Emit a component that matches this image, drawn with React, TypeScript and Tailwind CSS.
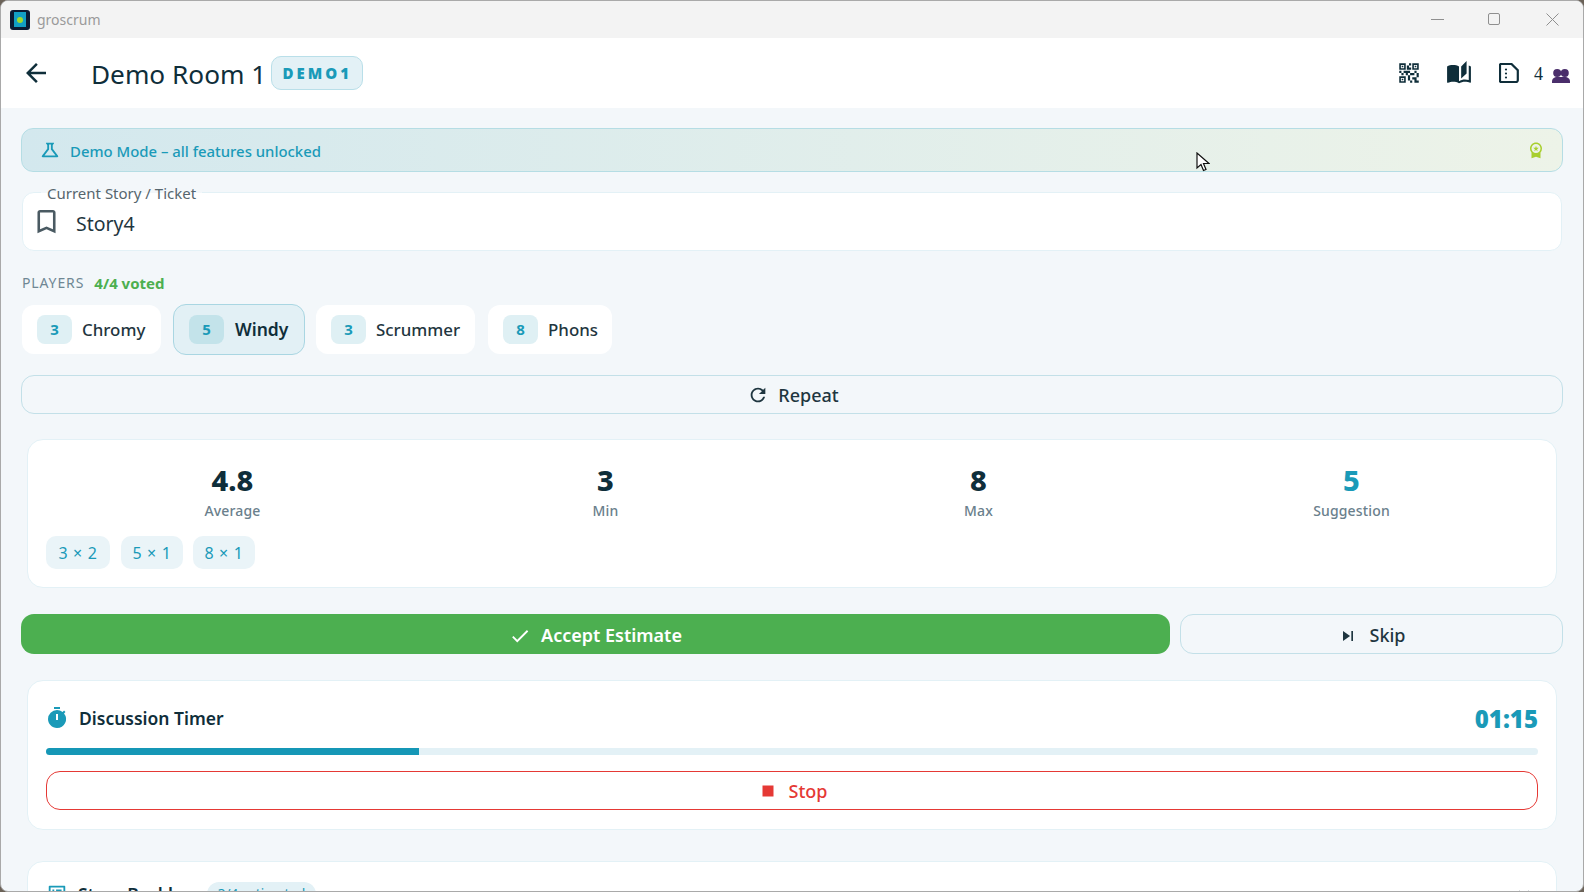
import React from "react";
import {
  MdArrowBack,
  MdAutoStories,
  MdBookmarkBorder,
  MdCheck,
  MdExpandMore,
  MdOutlineListAlt,
  MdOutlineScience,
  MdQrCode2,
  MdRefresh,
  MdSkipNext,
  MdStop,
  MdTimer,
  MdWorkspacePremium,
} from "react-icons/md";

const players = [
  { v: "3", n: "Chromy", w: "w-[139px]" },
  { v: "5", n: "Windy", w: "w-[132px] -mr-px", active: true },
  { v: "3", n: "Scrummer", w: "w-[159px] mr-px" },
  { v: "8", n: "Phons", w: "w-[124px]" },
];

const stats = [
  { v: "4.8", l: "Average" },
  { v: "3", l: "Min" },
  { v: "8", l: "Max" },
  { v: "5", l: "Suggestion", accent: true },
];

export default function App() {
  return (
    <div className="w-[1584px] h-[892px] overflow-hidden bg-[#6b6258] font-['Noto_Sans',sans-serif] text-[#0f2e3a]">
      <div className="relative w-full h-full overflow-hidden rounded-[8px] border border-[#a9a9a9] bg-[#f3f7fa]">
        <div className="h-[37px] bg-[#f3f3f3] flex items-center pl-[9px]">
          <div className="w-5 h-5 rounded-[3px] bg-[#0b1c33] flex items-center justify-center">
            <div className="w-[12px] h-[15px] bg-[#12a0c4] flex items-center justify-center">
              <div className="w-[6px] h-[6px] rounded-full bg-[#9fdc2c]" />
            </div>
          </div>
          <span className="ml-[7px] text-[14px] text-[#9a9a9a]">groscrum</span>
          <div className="ml-auto -mt-px flex items-center text-[#8c8c8c]">
            <div className="w-[13px] h-px bg-[#8f8f8f] mr-[44px]" />
            <div className="w-[12px] h-[12px] border border-[#8f8f8f] rounded-[2px] mr-[46px]" />
            <svg width="13" height="13" viewBox="0 0 13 13" className="mr-[24px]" stroke="#8f8f8f" fill="none">
              <path d="M.5.5l12 12M12.5.5l-12 12" />
            </svg>
          </div>
        </div>

        <header className="h-[70px] bg-white flex items-center pl-[20px] pr-[13px]">
          <MdArrowBack className="w-[30px] h-[30px]" />
          <h1 className="ml-[40px] mt-[3px] text-[26.2px] leading-none font-normal">Demo Room 1</h1>
          <div className="ml-[5px] h-[34px] w-[92px] rounded-[10px] bg-[#e3f1f6] border border-[#b9dfe9] flex items-center justify-center text-[15px] font-black tracking-[3px] text-[#1a9ab8]">
            DEMO1
          </div>
          <div className="ml-auto flex items-center">
            <MdQrCode2 className="w-[26px] h-[26px]" />
            <MdAutoStories className="ml-[24px] w-[26px] h-[26px]" />
            <svg width="20" height="20" viewBox="0 0 20 20" className="ml-[27px]" fill="none">
              <path d="M2.2 1h10.3l6.3 6.3v10a1.7 1.7 0 0 1-1.7 1.7H2.2a1.2 1.2 0 0 1-1.2-1.2V2.2A1.2 1.2 0 0 1 2.2 1z" stroke="#0f2e3a" strokeWidth="2.2" />
              <circle cx="7" cy="6.5" r="1.1" fill="#0f2e3a" />
              <circle cx="7" cy="10.5" r="1.1" fill="#0f2e3a" />
              <circle cx="7" cy="14.5" r="1.1" fill="#0f2e3a" />
            </svg>
            <span className="ml-[15px] text-[18px] leading-none mt-[2px] font-['Liberation_Serif',serif]">4</span>
            <svg width="18" height="14" viewBox="0 0 18 14" className="ml-[9px] mt-[5px]" fill="#4a2e6b">
              <circle cx="5.2" cy="4" r="4" />
              <circle cx="12.8" cy="4" r="4" />
              <path d="M0 14v-1.6C0 9.6 2.4 8 5 8h8c2.6 0 5 1.6 5 4.4V14z" />
            </svg>
          </div>
        </header>

        <main className="px-[20px]">
          <div className="mt-[20px] h-[44px] rounded-[12px] border border-[#b5dde4] bg-gradient-to-r from-[#d3e8ee] to-[#edf3e8] flex items-center pl-[17px] pr-[17px]">
            <MdOutlineScience className="w-[22px] h-[22px] text-[#1a9ab8]" />
            <span className="ml-[9px] mt-[2px] text-[14.9px] font-medium text-[#1a9ab8]">Demo Mode – all features unlocked</span>
            <MdWorkspacePremium className="ml-auto w-[18px] h-[18px] text-[#a8cf2e]" />
          </div>

          <div className="relative mt-[20px] h-[59px] mx-px rounded-[12px] border border-[#e3f1f6] bg-white flex items-center pl-[12px]">
            <span className="absolute left-[18px] -top-[9px] bg-gradient-to-b from-[#f3f7fa] from-50% to-white to-50% px-[6px] text-[15px] leading-[18px] text-[#56666e]">
              Current Story / Ticket
            </span>
            <MdBookmarkBorder className="w-[31px] h-[31px] text-[#4a5a62] -ml-[4px]" />
            <span className="ml-[14px] text-[19.5px] text-[#1f3640] mt-[5px]">Story4</span>
          </div>

          <div className="mt-[21px] mx-px flex items-center h-[21px]">
            <span className="text-[14px] tracking-[0.9px] text-[#6f8794]">PLAYERS</span>
            <span className="ml-[10px] mt-[2px] text-[15px] font-bold text-[#4caf50]">4/4 voted</span>
          </div>

          <div className="mt-[11px] mx-px flex items-center gap-[12px] h-[51px]">
            {players.map((p) => (
              <div
                key={p.n}
                className={
                  p.active
                    ? `${p.w} h-[51px] rounded-[13px] border border-[#a9d6e2] bg-[#e2f0f5] flex items-center pl-[15px]`
                    : `${p.w} h-[49px] rounded-[12px] bg-white flex items-center pl-[15px]`
                }
              >
                <span
                  className={
                    p.active
                      ? "w-[35px] h-[29px] rounded-[8px] bg-[#c3e3ea] flex items-center justify-center text-[15px] font-bold text-[#1a9ab8]"
                      : "w-[35px] h-[29px] rounded-[8px] bg-[#dff0f4] flex items-center justify-center text-[15px] font-bold text-[#1a9ab8]"
                  }
                >
                  {p.v}
                </span>
                <span className={p.active ? "ml-[11px] text-[17.5px] font-semibold" : "ml-[10px] text-[16.9px] font-medium text-[#1f3640]"}>
                  {p.n}
                </span>
              </div>
            ))}
          </div>

          <button className="mt-[20px] pt-px w-full h-[39px] rounded-[13px] border border-[#c3e0e8] flex items-center justify-center text-[18px] font-medium text-[#1f3640]">
            <MdRefresh className="w-[22px] h-[22px] ml-[2px] mr-[9px]" />
            Repeat
          </button>

          <section className="mt-[25px] mx-[6px] h-[149px] rounded-[16px] border border-[#e3f1f6] bg-white px-[18px] pt-[21px]">
            <div className="grid grid-cols-4">
              {stats.map((s) => (
                <div key={s.l} className="flex flex-col items-center">
                  <span className={s.accent ? "text-[29px] leading-[38px] font-extrabold text-[#1a9ab8]" : "text-[29px] leading-[38px] font-extrabold"}>
                    {s.v}
                  </span>
                  <span className="mt-[3px] text-[14px] leading-[18px] font-medium tracking-[0.15px] text-[#6a808c]">{s.l}</span>
                </div>
              ))}
            </div>
            <div className="mt-[16px] flex gap-[10px]">
              <span className="w-[64px] mr-px h-[33px] rounded-[10px] bg-[#eaf4f8] flex items-center justify-center text-[16px] tracking-[0.6px] text-[#1a9ab8]">3 × 2</span>
              <span className="w-[62px] h-[33px] rounded-[10px] bg-[#eaf4f8] flex items-center justify-center text-[16px] tracking-[0.6px] text-[#1a9ab8]">5 × 1</span>
              <span className="w-[62px] h-[33px] rounded-[10px] bg-[#eaf4f8] flex items-center justify-center text-[16px] tracking-[0.6px] text-[#1a9ab8]">8 × 1</span>
            </div>
          </section>

          <div className="mt-[26px] flex gap-[10px]">
            <button className="w-[1149px] h-[40px] pt-[3px] rounded-[13px] bg-[#4caf50] flex items-center justify-center text-[18px] font-semibold text-white">
              <MdCheck className="w-[22px] h-[22px] mr-[10px]" />
              Accept Estimate
            </button>
            <button className="flex-1 h-[40px] pt-[3px] rounded-[13px] border border-[#c3e0e8] flex items-center justify-center text-[18px] font-medium text-[#1f3640]">
              <MdSkipNext className="w-[20px] h-[20px] mr-[12px]" />
              Skip
            </button>
          </div>

          <section className="mt-[26px] mx-[6px] h-[150px] rounded-[16px] border border-[#e3f1f6] bg-white px-[18px] pt-[22px]">
            <div className="flex items-center h-[30px]">
              <MdTimer className="w-[24px] h-[24px] text-[#1a9ab8] -ml-px" />
              <span className="ml-[10px] text-[17.5px] font-semibold">Discussion Timer</span>
              <span className="ml-auto mt-[2px] text-[24px] font-black text-[#1a9ab8]">01:15</span>
            </div>
            <div className="mt-[15px] h-[7px] rounded-full bg-[#e3f1f6] overflow-hidden">
              <div className="h-full w-[25%] bg-[#1597b6]" />
            </div>
            <button className="mt-[16px] pt-px w-full h-[39px] rounded-[14px] border-[1.5px] border-[#e53935] flex items-center justify-center text-[18px] font-medium text-[#e53935]">
              <MdStop className="w-[22px] h-[22px] mr-[10px]" />
              Stop
            </button>
          </section>

          <section className="mt-[31px] mx-[6px] h-[100px] rounded-[16px] border border-[#e3f1f6] bg-white px-[18px] pt-[19px]">
            <div className="flex items-center h-[26px]">
              <MdOutlineListAlt className="w-[22px] h-[22px] text-[#1a9ab8]" />
              <span className="ml-[10px] text-[17.5px] font-semibold">Story Backlog</span>
              <span className="ml-[12px] h-[24px] px-[11px] rounded-full bg-[#e3f1f6] flex items-center text-[13.5px] text-[#1a9ab8]">3/4 estimated</span>
              <MdExpandMore className="ml-auto w-[24px] h-[24px] text-[#4a5a62] mr-[2px]" />
            </div>
          </section>
        </main>

        <svg width="14" height="20" viewBox="0 0 14 20" className="absolute left-[1195px] top-[151px]">
          <path d="M1 1v15l4-3.5 2.5 6 2.5-1-2.5-6H13z" fill="#fff" stroke="#111" strokeWidth="1.2" />
        </svg>
      </div>
    </div>
  );
}
